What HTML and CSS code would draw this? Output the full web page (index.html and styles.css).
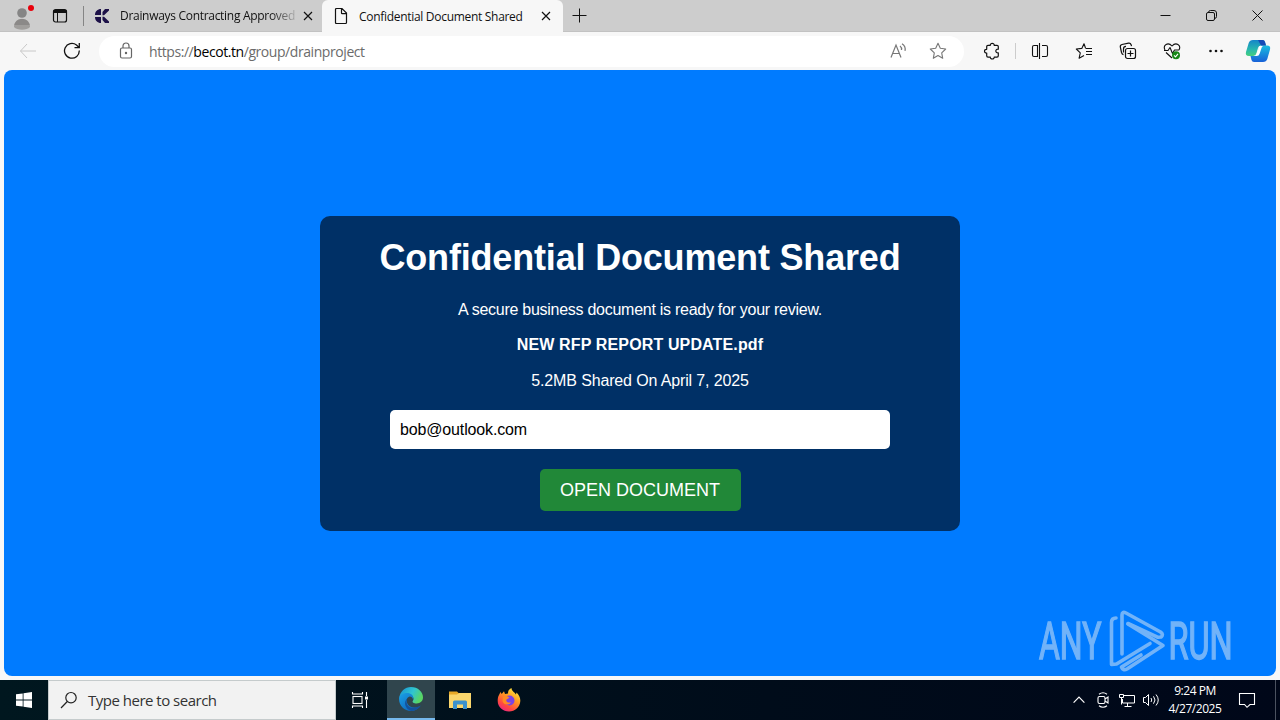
FILE: index.html
```html
<!DOCTYPE html>
<html lang="en">
<head>
    <meta charset="UTF-8">
    <meta name="viewport" content="width=device-width, initial-scale=1.0">
    <title>Confidential Document Shared</title>
    <link rel="stylesheet" href="styles.css">
</head>
<body>
    <div class="tab-strip">
        <div class="profile">
            <svg width="28" height="28" viewBox="0 0 28 28">
                <circle cx="14" cy="10" r="4.8" fill="#858585"/>
                <path d="M6 24c0-11 16-11 16 0-3 3.500-13 3.500-16 0z" fill="#a09e9c"/>
                <path d="M6.300 22c2-8 13.500-8 15.400 0z" fill="#8b8988"/>
                <circle cx="23" cy="5" r="3" fill="#e8000b"/>
            </svg>
        </div>
        <div class="tab-actions">
            <svg width="16" height="16" viewBox="0 0 16 16" fill="none" stroke="#111">
                <rect x="1.500" y="1.500" width="13" height="12.500" rx="2" stroke-width="1.200"/>
                <path d="M1.500 3.500h13" stroke-width="3"/>
                <path d="M5.500 4v10"/>
            </svg>
        </div>
        <div class="strip-divider"></div>
        <div class="tab">
            <svg class="favicon" width="16" height="16" viewBox="0 0 16 16" fill="#1d1148">
                <path d="M7 1v6H1C1 3.500 3.500 1 7 1zM1 9h6v6C3.500 15 1 12.500 1 9z"/>
                <path d="M8.500 7.300V4L11 1h4v1.500L10 7.300zM8.500 8.700H10l5 4.800V15h-4l-2.500-3z"/>
            </svg>
            <span class="tab-title fade">Drainways Contracting Approved</span>
            <svg class="tab-close" width="10" height="10" viewBox="0 0 10 10" stroke="#111" stroke-width="1.200"><path d="M1 1l8 8M9 1L1 9"/></svg>
        </div>
        <div class="tab active">
            <svg class="favicon" width="16" height="18" viewBox="0 0 16 18" fill="none" stroke="#111" stroke-width="1.200">
                <path d="M2.500 2.500q0-1 1-1H9L13.500 6v9.500q0 1-1 1h-9q-1 0-1-1zM8.500 1.500V6q0 .7.7.7h4.300"/>
            </svg>
            <span class="tab-title">Confidential Document Shared</span>
            <svg class="tab-close" width="10" height="10" viewBox="0 0 10 10" stroke="#111" stroke-width="1.200"><path d="M1 1l8 8M9 1L1 9"/></svg>
        </div>
        <div class="new-tab">
            <svg width="15" height="15" viewBox="0 0 15 15" stroke="#111"><path d="M.5 7.500h14M7.500.5v14"/></svg>
        </div>
        <div class="window-controls">
            <span><svg width="11" height="11" viewBox="0 0 11 11" stroke="#111"><path d="M.5 5.500h10"/></svg></span>
            <span><svg width="11" height="11" viewBox="0 0 11 11" fill="none" stroke="#111"><rect x=".5" y="2.500" width="8" height="8" rx="1.500"/><path d="M2.500 2.300Q2.700.5 4.500.5h3.500q2.500 0 2.500 2.500v3.500q0 1.800-1.800 2"/></svg></span>
            <span><svg width="11" height="11" viewBox="0 0 11 11" stroke="#111"><path d="M.5.5l10 10M10.500.5l-10 10"/></svg></span>
        </div>
    </div>

    <div class="toolbar">
        <div class="tool">
            <svg width="18" height="16" viewBox="0 0 18 16" fill="none" stroke="#c8c8c8"><path d="M8 1L1.500 8 8 15M1.500 8H17"/></svg>
        </div>
        <div class="tool">
            <svg width="18" height="18" viewBox="0 0 18 18" fill="none" stroke="#111" stroke-width="1.300"><path d="M16.300 8.500A7.400 7.400 0 1 1 13.500 3l2.300 2.300M16.300 1v4.700h-4.800"/></svg>
        </div>
        <div class="address">
            <svg width="14" height="18" viewBox="0 0 14 18" fill="none" stroke="#666" stroke-width="1.200">
                <rect x="1.500" y="6" width="11" height="10" rx="1.500"/>
                <path d="M4 6V4c0-4 6-4 6 0v2"/>
                <circle cx="7" cy="11" r=".6" fill="#666"/>
            </svg>
            <span class="url">https://<b>becot.tn</b>/group/drainproject</span>
            <svg class="read-aloud" width="17" height="16" viewBox="0 0 17 16" fill="none" stroke="#777" stroke-width="1.200">
                <path d="M1 14.500L6 2l5 12.500M2.800 10.500h6.500M10 3q2 1.500 1.500 4M12 .8q4 2.700 3 7"/>
            </svg>
            <svg width="18" height="18" viewBox="0 0 18 18" fill="none" stroke="#777" stroke-width="1.100" stroke-linejoin="round">
                <path d="M9 1.300l2.300 5 5.400.7-4 3.800 1 5.500L9 13.600l-4.700 2.700 1-5.500L1.300 7l5.400-.7z"/>
            </svg>
        </div>
        <div class="tool extensions">
            <svg width="18" height="18" viewBox="0 0 18 18" fill="none" stroke="#111" stroke-width="1.200" stroke-linejoin="round">
                <path d="M5 3.300h2.300C7 .8 11.500.8 11.200 3.300H14q1.300 0 1.300 1.300v2.600c-3.300-.4-3.300 4 0 3.600v3q0 1.300-1.300 1.300h-2.800c.3 2.500-4.200 2.500-3.900 0H5q-1.300 0-1.300-1.300V11C.8 11.300.8 7 3.700 7.300V4.600Q3.700 3.300 5 3.300z"/>
            </svg>
        </div>
        <div class="tool-divider"></div>
        <div class="tool">
            <svg width="18" height="18" viewBox="0 0 18 18" fill="none" stroke="#111" stroke-width="1.100">
                <path d="M6.500 3.500H3q-1.500 0-1.500 1.500v8Q1.500 14.500 3 14.500h3.500zM11 3.500h4q1.500 0 1.500 1.500v8q0 1.500-1.500 1.500h-4M8.500 1v16"/>
            </svg>
        </div>
        <div class="tool">
            <svg width="18" height="18" viewBox="0 0 18 18" fill="none" stroke="#111" stroke-width="1.100" stroke-linejoin="round">
                <path d="M10.500 6L9 1.700 6.800 6.400 1.300 7l4 3.800-1.200 5.400L9 13.500M10.500 6.500H17M11 9.500h6M11 12.500h6"/>
            </svg>
        </div>
        <div class="tool">
            <svg width="18" height="18" viewBox="0 0 18 18" fill="none" stroke="#111" stroke-width="1.200">
                <rect x="6.500" y="6.500" width="10" height="10" rx="2"/>
                <path d="M11.500 8.500v6M8.500 11.500h6M4.500 12.700Q3 12.500 2.500 10.500L1.300 5Q1 3 3 2.500l6.500-1.300q2-.3 2.600 1.500l.4 1.500M4.500 10.500V7Q4.500 4.500 7 4.400"/>
            </svg>
        </div>
        <div class="tool">
            <svg width="18" height="18" viewBox="0 0 18 18" fill="none" stroke="#111" stroke-width="1.100" stroke-linejoin="round">
                <path d="M2 8C-.5 3 5-.5 9 4c4-4.500 9.500-1 7 4M1 8.500h4L7 5.500l2.500 6L11.500 8H16M3 10.500l6 5.500"/>
                <circle cx="13" cy="13.300" r="4" fill="#178717" stroke="none"/>
                <path d="M11 13.300l1.500 1.500 2.500-3" stroke="#fff"/>
            </svg>
        </div>
        <div class="tool">
            <svg width="16" height="4" viewBox="0 0 16 4" fill="#111"><circle cx="2.500" cy="2" r="1.300"/><circle cx="8" cy="2" r="1.300"/><circle cx="13.500" cy="2" r="1.300"/></svg>
        </div>
        <div class="tool copilot">
            <svg width="26" height="24" viewBox="0 0 26 24">
                <defs>
                    <linearGradient id="cpA" x1="0" y1="0" x2="0" y2="1"><stop offset="0" stop-color="#1585c9"/><stop offset=".6" stop-color="#28b8ae"/><stop offset="1" stop-color="#45cf7c"/></linearGradient>
                    <linearGradient id="cpB" x1="0" y1="0" x2="0" y2="1"><stop offset="0" stop-color="#19bde0"/><stop offset="1" stop-color="#1861d8"/></linearGradient>
                </defs>
                <path d="M8 1h9.500q2 0 2.500 2l1 3.500h-5Q13.500 6.500 13 9l-1.500 5q-.7 3-3.500 3H4q-4 0-3-4L3.700 4Q4.700 1 8 1z" fill="url(#cpA)"/>
                <path d="M18 23H9q-2 0-2.500-2L5.500 17H9q2.800 0 3.500-3L14 9q.7-2.500 3-2.500h5q4 0 3 4L22.300 20q-1 3-4.300 3z" fill="url(#cpB)"/>
                <path d="M13 1h4.500q2 0 2.500 2l1 3.500h-5z" fill="#164bb7"/>
                <path d="M14.500 7L11.500 15q-.8 2-3 2h3q2.500 0 3.200-2.500l2-6q.5-1.500 1.500-1.500z" fill="#fff"/>
            </svg>
        </div>
    </div>

    <div class="viewport">
        <div class="card">
            <h1>Confidential Document Shared</h1>
            <p class="intro">A secure business document is ready for your review.</p>
            <p class="filename">NEW RFP REPORT UPDATE.pdf</p>
            <p class="meta">5.2MB Shared On April 7, 2025</p>
            <input class="email" type="text" value="bob@outlook.com">
            <button class="open-btn">OPEN DOCUMENT</button>
        </div>
        <svg class="watermark" width="200" height="68" viewBox="0 0 200 68">
            <g opacity=".47" fill="#f2f2f2" stroke="#f2f2f2">
                <g font-family="Roboto, sans-serif" font-size="51" stroke-width="1.500">
                    <text transform="translate(3 53) scale(.6 1)" textLength="104" lengthAdjust="spacingAndGlyphs">ANY</text>
                    <text transform="translate(132.500 53) scale(.6 1)" textLength="107" lengthAdjust="spacingAndGlyphs">RUN</text>
                </g>
                <g fill="none" stroke-width="3.600" stroke-linejoin="round" stroke-linecap="round">
                    <path d="M86 48V9q0-4 4-2l34.500 19q3.500 2.500.5 5l-3 .3L92 17.500"/>
                    <path d="M80 12q-4.500 0-4.500 4.500v42l5-.5L114 37.500"/>
                    <path d="M92 18l35 21.500-36 23.500q-4 2-5.500-2L105 49"/>
                </g>
            </g>
        </svg>
    </div>

    <div class="taskbar">
        <div class="start">
            <svg width="16" height="16" viewBox="0 0 16 16" fill="#fff"><path d="M0 2.300l6.700-.9v6.200H0zM7.500 1.300L16 .1v7.500H7.500zM0 8.400h6.700v6.200L0 13.700zM7.500 8.400H16v7.500l-8.500-1.200z"/></svg>
        </div>
        <div class="search">
            <svg width="18" height="18" viewBox="0 0 18 18" fill="none" stroke="#222" stroke-width="1.200"><circle cx="11" cy="6.700" r="5.200"/><path d="M7.300 10.500L1 17"/></svg>
            <span>Type here to search</span>
        </div>
        <div class="task-item">
            <svg width="18" height="18" viewBox="0 0 18 18" fill="none" stroke="#fff" stroke-width="1.100">
                <rect x="2" y="5.500" width="9" height="7"/>
                <path d="M1.500 1v2h10V1M1.500 17v-2h10v2M15.500 1v4M15.500 9v8"/>
                <rect x="14" y="5.500" width="3" height="3" fill="#fff" stroke="none"/>
            </svg>
        </div>
        <div class="task-item running">
            <svg width="24" height="24" viewBox="0 0 24 24">
                <defs>
                    <linearGradient id="edgeTop" x1="0" y1="0" x2="1" y2=".4"><stop offset="0" stop-color="#168fd5"/><stop offset=".6" stop-color="#30c5d0"/><stop offset="1" stop-color="#58d565"/></linearGradient>
                    <linearGradient id="edgeLow" x1="0" y1="0" x2="1" y2="1"><stop offset="0" stop-color="#1aa1e8"/><stop offset="1" stop-color="#0a55ad"/></linearGradient>
                </defs>
                <path d="M.2 11C1 4.500 6 0 12 0c7 0 12 5 12 10.300 0 4-3 6.200-6.300 6.200-3 0-4.700-1.300-4-2.200 2.300-3.300-.2-6.300-4.700-6.300C5 8 1.500 9 .2 11z" fill="url(#edgeTop)"/>
                <path d="M.1 11C1 7.500 4.500 6 8 6c5 0 7 3.500 6 6.500-.5-2-1.500-3-3.500-3-2.500 1-3.500 3-2.500 6.300 1 3.200 4.500 5 8 4.700 2.500 0 4.500-1 5.800-2C19.500 22 16 24 12 24 5 24-.5 18 .1 11z" fill="url(#edgeLow)"/>
                <path d="M8.500 11c-3 5 1 11 7 9.700 2.500-.3 4.500-1.200 6.300-2.200-2.300 3.300-5.800 5.400-9.500 5.500C6 22 4 15 8.500 11z" fill="#14519b"/>
            </svg>
        </div>
        <div class="task-item">
            <svg width="22" height="20" viewBox="0 0 22 20">
                <path d="M0 1.500h8l2 2h12V18H0z" fill="#e8a927"/>
                <path d="M0 4.500h8l2-1.500h12v15H0z" fill="#fad66c"/>
                <path d="M4 19v-7q0-1.500 1.500-1.500h11Q18 10.500 18 12v7h-4v-4.500H8V19z" fill="#3b91cc"/>
            </svg>
        </div>
        <div class="task-item">
            <svg width="24" height="24" viewBox="0 0 24 24">
                <defs>
                    <linearGradient id="fox" x1=".8" y1="0" x2=".2" y2="1"><stop offset="0" stop-color="#fff044"/><stop offset=".4" stop-color="#ff9a20"/><stop offset=".75" stop-color="#ff4740"/><stop offset="1" stop-color="#e9208c"/></linearGradient>
                </defs>
                <path d="M2 7L3.500 4l1.200 2L7 3.300 8 6l3-.5C11 3 12 1 14.500 0c0 3 3 4 4.500 6.500l.5-2C22 7 23.500 10 23.300 13 23 19 18 23.500 12 23.500S.7 19 .7 13C.7 10.500 1 8.500 2 7z" fill="url(#fox)"/>
                <circle cx="12.500" cy="12.500" r="5" fill="#7943e5"/>
                <path d="M6 9c3-2 5-1 6.500.8L9.500 11.500c-1 2 1.500 3.500 4.500 2.700-1.500 3.500-7.500 3-8.500-1.200z" fill="#ff8b22"/>
            </svg>
        </div>
        <div class="tray">
            <span class="tray-icon"><svg width="12" height="8" viewBox="0 0 12 8" fill="none" stroke="#fff" stroke-width="1.200"><path d="M.6 6.600L6 1.200l5.400 5.400"/></svg></span>
            <span class="tray-icon"><svg width="14" height="18" viewBox="0 0 14 18" fill="none" stroke="#fff" stroke-width="1.100"><rect x="2" y="5.500" width="7" height="7" rx="1.500"/><path d="M9 8l3-2v6l-3-2M3 3.200q4-2.800 8 0M3 14.800q4 2.800 8 0"/></svg></span>
            <span class="tray-icon"><svg width="18" height="16" viewBox="0 0 18 16" fill="none" stroke="#fff"><path d="M6 3.500h10.500v7.500H4.500V7M9.500 11v3.500M6.500 14.500h7M1.500 2.500h4v3h-4zM3.500 5.500v7"/></svg></span>
            <span class="tray-icon"><svg width="18" height="16" viewBox="0 0 18 16" fill="none" stroke="#fff"><path d="M1.500 5.500h2l3-3v11l-3-3h-2zM9 6q1.500 2 0 4M11.500 4.300q3 3.700 0 7.400M14 2.500q4.500 5.500 0 11"/></svg></span>
        </div>
        <div class="clock">
            <span>9:24 PM</span>
            <span>4/27/2025</span>
        </div>
        <div class="notifications">
            <svg width="18" height="18" viewBox="0 0 18 18" fill="none" stroke="#fff" stroke-width="1.100"><path d="M1.500 2.500h15v11H12L9 16.300 6.500 13.500h-5z"/></svg>
        </div>
        <div class="show-desktop"></div>
    </div>
</body>
</html>
```
FILE: styles.css
```css
* {
    box-sizing: border-box;
}
body {
    margin: 0;
    width: 1280px;
    height: 720px;
    overflow: hidden;
    display: flex;
    flex-direction: column;
    background-color: #f7f7f7;
    font-family: "Open Sans", "Noto Sans", sans-serif;
}
svg {
    display: block;
    flex-shrink: 0;
}

/* Tab strip */
.tab-strip {
    height: 32px;
    display: flex;
    align-items: center;
    background-color: #cdcdcd;
    border-bottom: 1px solid #c2c2c2;
}
.profile {
    width: 44px;
    padding: 3px 8px 0;
}
.tab-actions {
    width: 39px;
    padding-left: 8px;
}
.strip-divider {
    width: 1px;
    height: 20px;
    background-color: #858585;
}
.tab {
    width: 238px;
    height: 32px;
    display: flex;
    align-items: center;
    padding-left: 10px;
    font-size: 12px;
    color: #111;
}
.tab.active {
    width: 241px;
    margin-bottom: -1px;
    padding-left: 11px;
    background-color: #f7f7f7;
    border-radius: 6px 6px 0 0;
}
.tab-title {
    width: 177px;
    margin-left: 10px;
    white-space: nowrap;
    letter-spacing: -0.3px;
}
.fade {
    -webkit-mask-image: linear-gradient(to right, #000 150px, transparent 180px);
    mask-image: linear-gradient(to right, #000 150px, transparent 180px);
}
.tab-close {
    margin-left: 6px;
}
.active .tab-close {
    margin-left: 5px;
}
.new-tab {
    padding-left: 9px;
}
.window-controls {
    display: flex;
    margin-left: auto;
}
.window-controls span {
    width: 46px;
    display: flex;
    justify-content: center;
}

/* Toolbar */
.toolbar {
    height: 38px;
    display: flex;
    align-items: center;
    padding-left: 6px;
}
.tool {
    width: 44px;
    display: flex;
    justify-content: center;
}
.address {
    width: 865px;
    height: 31px;
    margin-left: 5px;
    padding: 0 17px 0 20px;
    display: flex;
    align-items: center;
    background-color: #fff;
    border-radius: 16px;
}
.url {
    margin-left: 16px;
    font-size: 14px;
    color: #6b6b6b;
    letter-spacing: -0.43px;
}
.url b {
    font-weight: 400;
    color: #000;
}
.read-aloud {
    margin-left: auto;
    margin-right: 22px;
}
.extensions {
    margin-left: 6px;
}
.tool-divider {
    width: 1px;
    height: 16px;
    margin: 0 2px 0 1px;
    background-color: #ccc;
}
.copilot {
    width: 40px;
}

/* Page */
.viewport {
    position: relative;
    height: 606px;
    margin: 0 4px 4px;
    padding-top: 146px;
    background-color: #007bff;
    border-radius: 8px;
}
.card {
    width: 640px;
    height: 315px;
    margin: 0 auto;
    padding: 20px;
    display: flex;
    flex-direction: column;
    align-items: center;
    background-color: #003066;
    border-radius: 10px;
    color: #fff;
    font-family: "Liberation Sans", Arial, sans-serif;
    font-size: 16px;
}
.card h1 {
    margin: 1px 0 22px;
    font-size: 36px;
    line-height: 42px;
    letter-spacing: -0.18px;
}
.card p {
    margin: 0;
    line-height: 18px;
}
.card .intro {
    letter-spacing: -0.27px;
}
.card .filename {
    margin: 17px 0 18px;
    font-weight: bold;
    letter-spacing: 0.14px;
}
.card .meta {
    letter-spacing: -0.14px;
}
.email {
    width: 500px;
    height: 39px;
    margin-top: 20px;
    padding: 10px;
    border: none;
    border-radius: 5px;
    font-family: inherit;
    font-size: 16px;
    letter-spacing: -0.15px;
    color: #000;
}
.open-btn {
    width: 201px;
    height: 42px;
    margin-top: 20px;
    padding: 0;
    border: none;
    border-radius: 5px;
    background-color: #218838;
    color: #fff;
    font-family: inherit;
    font-size: 18px;
}
.watermark {
    position: absolute;
    right: 40px;
    bottom: 2px;
}

/* Taskbar */
.taskbar {
    height: 40px;
    display: flex;
    background: linear-gradient(to right, #00171f, #000c1a 60%, #000719);
    color: #fff;
}
.start {
    width: 48px;
    display: flex;
    align-items: center;
    justify-content: center;
}
.search {
    width: 288px;
    display: flex;
    align-items: center;
    padding-left: 11px;
    gap: 10px;
    background-color: #f2f2f2;
    border: 1px solid #c5cbcc;
    color: #333;
    font-size: 15px;
    letter-spacing: -0.5px;
}
.task-item {
    width: 48px;
    margin-right: 1px;
    display: flex;
    align-items: center;
    justify-content: center;
}
.running {
    margin-left: 2px;
    background-color: #30454d;
    border-bottom: 2px solid #76b9ed;
}
.tray {
    margin-left: auto;
    display: flex;
    align-items: center;
}
.tray-icon {
    width: 24px;
    display: flex;
    justify-content: center;
}
.clock {
    width: 64px;
    display: flex;
    flex-direction: column;
    align-items: center;
    justify-content: center;
    font-size: 12px;
    line-height: 18px;
    letter-spacing: -0.45px;
}
.notifications {
    width: 48px;
    padding-right: 8px;
    display: flex;
    align-items: center;
    justify-content: center;
}
.show-desktop {
    width: 5px;
    border-left: 1px solid #4b5260;
}
```
